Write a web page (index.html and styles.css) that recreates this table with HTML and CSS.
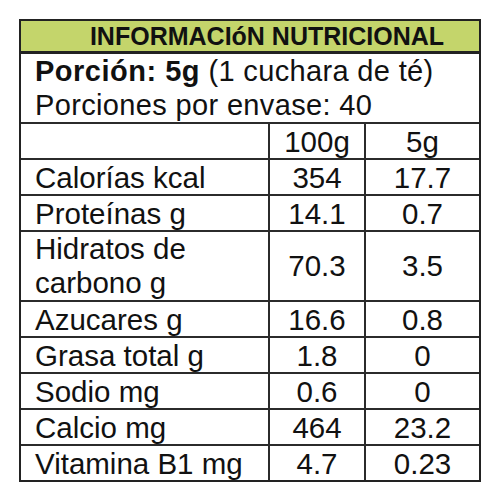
FILE: index.html
```html
<!DOCTYPE html>
<html lang="es">
<head>
    <meta charset="UTF-8">
    <meta name="viewport" content="width=device-width, initial-scale=1.0">
    <title>Información nutricional</title>
    <link rel="stylesheet" href="styles.css">
</head>
<body>
    <div class="label">
        <div class="label-title">INFORMACIóN NUTRICIONAL</div>
        <div class="serving">
            <p><b>Porción: 5g</b> (1 cuchara de té)</p>
            <p>Porciones por envase: 40</p>
        </div>
        <table class="facts">
            <colgroup>
                <col class="col-name">
                <col class="col-100">
                <col class="col-5">
            </colgroup>
            <tr>
                <td></td>
                <td>100g</td>
                <td>5g</td>
            </tr>
            <tr>
                <td>Calorías kcal</td>
                <td>354</td>
                <td>17.7</td>
            </tr>
            <tr>
                <td>Proteínas g</td>
                <td>14.1</td>
                <td>0.7</td>
            </tr>
            <tr class="tall">
                <td>Hidratos de<br>carbono g</td>
                <td>70.3</td>
                <td>3.5</td>
            </tr>
            <tr>
                <td>Azucares g</td>
                <td>16.6</td>
                <td>0.8</td>
            </tr>
            <tr>
                <td>Grasa total g</td>
                <td>1.8</td>
                <td>0</td>
            </tr>
            <tr>
                <td>Sodio mg</td>
                <td>0.6</td>
                <td>0</td>
            </tr>
            <tr>
                <td>Calcio mg</td>
                <td>464</td>
                <td>23.2</td>
            </tr>
            <tr>
                <td>Vitamina B1 mg</td>
                <td>4.7</td>
                <td>0.23</td>
            </tr>
        </table>
    </div>
</body>
</html>
```

FILE: styles.css
```css
* {
    box-sizing: border-box;
}
body {
    margin: 0;
    background: #ffffff;
    font-family: "Liberation Sans", Arial, sans-serif;
    color: #111;
}
.label {
    width: 462px;
    margin: 19px 0 0 19px;
    border: 2px solid #222;
}
.label-title {
    height: 33px;
    padding-left: 34px;
    background: #c4d56b;
    border-bottom: 3px solid #222;
    font-size: 25px;
    font-weight: bold;
    line-height: 31px;
    text-align: center;
}
.serving {
    padding: 0 0 0 14px;
    height: 68px;
}
.serving p {
    margin: 0;
    font-size: 29px;
    line-height: 34px;
    letter-spacing: 0.35px;
}
.serving b {
    letter-spacing: 0.5px;
}
.facts {
    width: 458px;
    table-layout: fixed;
    border-spacing: 0;
}
.col-name {
    width: 247px;
}
.col-100 {
    width: 96px;
}
.col-5 {
    width: 115px;
}
.facts td {
    border-top: 2px solid #2b2b2b;
    padding: 0;
    height: 36px;
    font-size: 29.5px;
    line-height: 33px;
    text-align: center;
}
.facts td:first-child {
    text-align: left;
    padding-left: 14px;
}
.facts td + td {
    border-left: 2px solid #2b2b2b;
}
.facts .tall td {
    height: 69px;
    line-height: 34px;
}
```
